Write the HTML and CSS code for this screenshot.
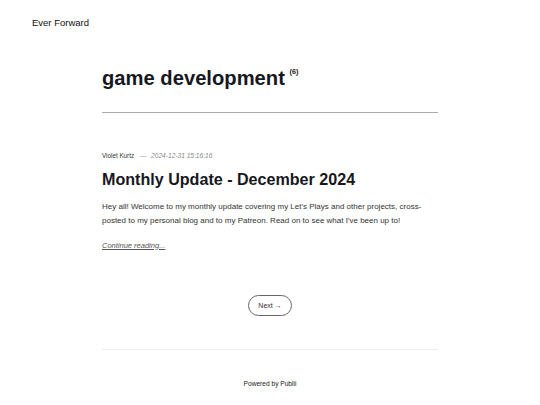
FILE: index.html
```html
<!DOCTYPE html>
<html lang="en">
<head>
<meta charset="utf-8">
<title>game development - Ever Forward</title>
<link rel="stylesheet" href="styles.css">
</head>
<body>
<header class="site-header">
  <a class="logo" href="#">Ever Forward</a>
</header>
<main class="wrapper">
  <div class="page-head">
    <h1 class="page-title">game development <sup class="count">(6)</sup></h1>
  </div>
  <article class="post">
    <div class="meta">
      <span class="author">Violet Kurtz</span>
      <span class="sep"></span>
      <time class="date">2024-12-31 15:16:16</time>
    </div>
    <h2 class="post-title">Monthly Update - December 2024</h2>
    <p class="excerpt">Hey all! Welcome to my monthly update covering my Let's Plays and other projects, cross-posted to my personal blog and to my Patreon. Read on to see what I've been up to!</p>
    <a class="more" href="#">Continue reading...</a>
  </article>
  <nav class="pager">
    <a class="btn" href="#">Next →</a>
  </nav>
  <footer class="footer">
    <p class="powered">Powered by Publii</p>
  </footer>
</main>
</body>
</html>
```
FILE: styles.css
```css
* { box-sizing: border-box; }
body {
  margin: 0;
  font-family: "Liberation Sans", Arial, sans-serif;
  color: #17181e;
  background: #fff;
}
a { color: inherit; text-decoration: none; }
.site-header {
  padding: 17px 0 0 32px;
  height: 29px;
}
.logo {
  display: block;
  font-size: 9.5px;
  line-height: 12px;
  color: #111;
}
.wrapper {
  width: 336px;
  margin: 0 auto;
}
.page-head {
  padding-top: 37px;
  padding-bottom: 22px;
  border-bottom: 1px solid #aaa;
}
.page-title {
  margin: 0;
  font-size: 20.2px;
  line-height: 24px;
  font-weight: 700;
}
.count {
  font-size: 7.4px;
  line-height: 0;
  font-weight: 700;
  vertical-align: 0;
  position: relative;
  top: -11px;
  margin-left: -1px;
}
.post { padding-top: 38px; }
.meta {
  display: flex;
  align-items: center;
  font-size: 6.3px;
  line-height: 10px;
  height: 10px;
}
.author { color: #333; }
.sep {
  width: 7px;
  height: 1px;
  background: #ccc;
  margin: 0 4px 0 6px;
}
.date { color: #888; font-style: italic; font-size: 6.6px; }
.post-title {
  margin: 8.5px 0 0;
  font-size: 16.1px;
  line-height: 19px;
  font-weight: 700;
}
.excerpt {
  margin: 11px 0 0;
  font-size: 8px;
  line-height: 14.3px;
  color: #333;
}
.more {
  display: inline-block;
  margin-top: 11.5px;
  font-size: 7.5px;
  line-height: 12px;
  font-style: italic;
  text-decoration: underline;
  color: #555;
}
.pager {
  display: flex;
  justify-content: center;
  padding-top: 43px;
}
.btn {
  display: flex;
  align-items: center;
  justify-content: center;
  width: 44px;
  height: 21px;
  border: 1px solid #666;
  border-radius: 11px;
  font-size: 7px;
  color: #333;
}
.footer {
  margin-top: 33px;
  border-top: 1px solid #eee;
}
.powered {
  margin: 29px 0 0;
  text-align: center;
  font-size: 6.6px;
  line-height: 10px;
  color: #222;
}
```
